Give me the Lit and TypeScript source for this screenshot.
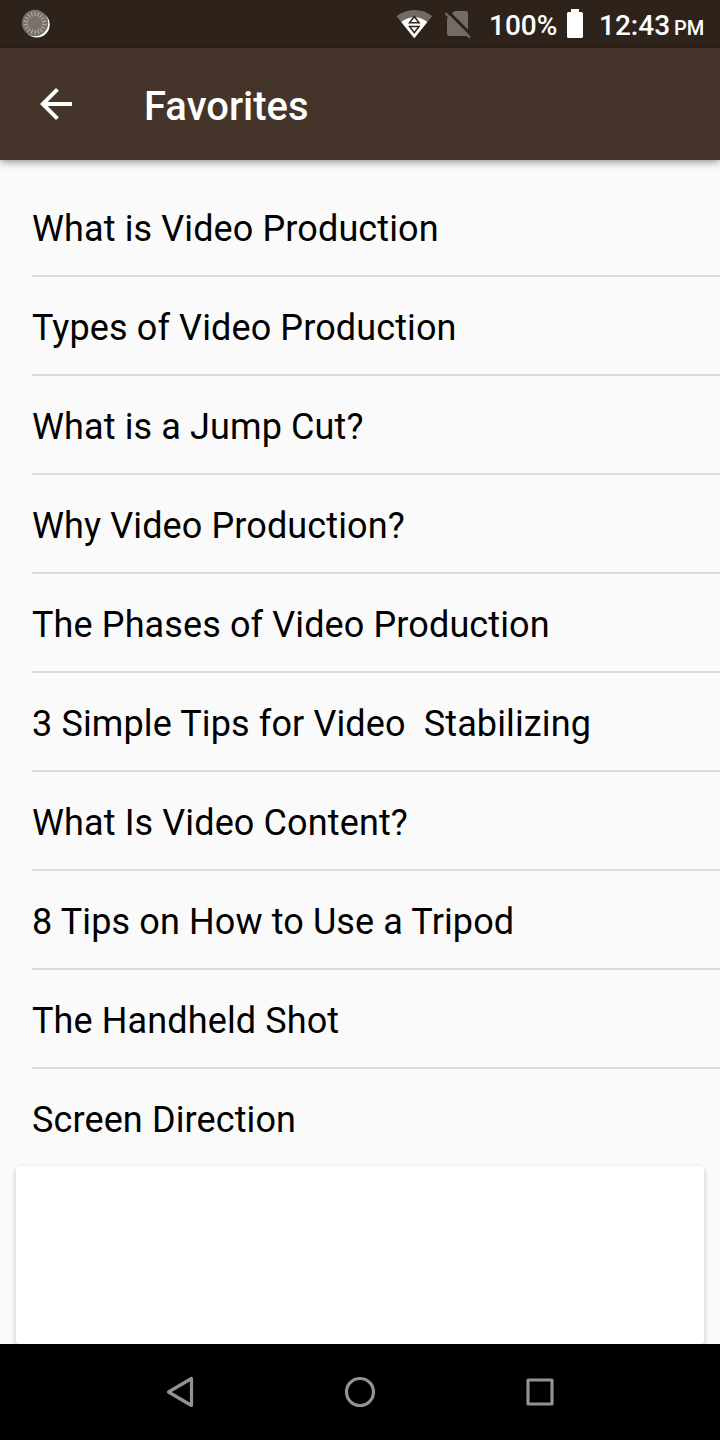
import { LitElement, html, css, svg } from "lit";
import { customElement, property } from "lit/decorators.js";

const TOPICS = [
  "What is Video Production",
  "Types of Video Production",
  "What is a Jump Cut?",
  "Why Video Production?",
  "The Phases of Video Production",
  "3 Simple Tips for Video  Stabilizing",
  "What Is Video Content?",
  "8 Tips on How to Use a Tripod",
  "The Handheld Shot",
  "Screen Direction",
];

@customElement("status-bar")
class StatusBar extends LitElement {
  static styles = css`
    :host {
      display: flex;
      align-items: center;
      height: 48px;
      padding: 0 16px 0 20px;
      box-sizing: border-box;
      background: #2e231b;
      color: #fff;
      font: 500 28px/48px Roboto, sans-serif;
    }
    svg { display: block; flex: none; }
    .space { flex: 1; }
    .sim { margin: 0 17px 0 12px; }
    .level { width: 77px; padding-top: 2px; box-sizing: border-box; height: 48px; }
    .battery { margin-right: 16px; }
    .clock { display: flex; align-items: baseline; width: 105px; height: 48px; padding-top: 2px; box-sizing: border-box; white-space: pre; }
    .half { font-size: 20px; margin-left: 4px; }
  `;
  render() {
    const ticks = Array.from({ length: 18 }, (_, i) => i * 20);
    return html`
      <svg width="32" height="48" viewBox="0 0 32 48">
        <circle cx="16.800" cy="24.700" r="12.900" fill="#fff" />
        <circle cx="15" cy="23" r="13.2" fill="#77706b" />
        ${ticks.map(
          (a) => svg`<path d="M15 11.5v4.5" stroke="#aaa5a1" stroke-width="1.3" transform="rotate(${a} 15 23)" />`
        )}
      </svg>
      <div class="space"></div>
      <svg width="36" height="48" viewBox="396 0 36 48">
        <path d="M396.6 16.2C401.5 12.3 407.600 10 414.300 10s12.900 2.300 17.800 6.200L414.300 38.300z" fill="#746b66" />
        <path d="M401.300 22C405 19 409.400 17.300 414.300 17.300s9.300 1.700 13 4.700L414.300 38.300z" fill="#fff" />
        <path d="M414.300 16.500l4.800 6.300h-9.600zM409.500 26.400h9.600l-4.800 6.300z" fill="#fff" stroke="#2e231b" stroke-width="1.500" />
      </svg>
      <svg class="sim" width="28" height="48" viewBox="444 0 28 48">
        <path d="M454.500 11h11.500q2 0 2 2v21q0 2-2 2h-17q-2 0-2-2V18.500z" fill="#746b66" />
        <path d="M447.800 11.500L472 35.700" stroke="#2e231b" stroke-width="3" />
        <path d="M445.300 13L469.800 37.500" stroke="#746b66" stroke-width="2.400" />
      </svg>
      <span class="level">100%</span>
      <svg class="battery" width="17" height="48" viewBox="566 0 17 48">
        <path d="M571 9h8v3h2.500q1.500 0 1.500 1.500v23q0 1.500-1.500 1.500h-13q-1.500 0-1.500-1.500v-23q0-1.500 1.500-1.500h2.500z" fill="#fff" />
      </svg>
      <span class="clock">12:43<span class="half">PM</span></span>
    `;
  }
}

@customElement("app-header")
class AppHeader extends LitElement {
  @property() heading = "";
  static styles = css`
    :host {
      display: flex;
      align-items: center;
      gap: 72px;
      height: 112px;
      padding: 0 40px;
      box-sizing: border-box;
      background: #453429;
      color: #fff;
      box-shadow: 0 2px 8px rgba(0, 0, 0, 0.42);
      position: relative;
    }
    svg { display: block; }
    .title { margin: 0; padding-top: 6px; font: 500 40px/48px Roboto, sans-serif; }
  `;
  render() {
    return html`
      <svg width="32" height="32" viewBox="4 4 16 16">
        <path d="M20 11H7.830l5.590-5.590L12 4l-8 8 8 8 1.410-1.410L7.830 13H20z" fill="#fff" />
      </svg>
      <h1 class="title">${this.heading}</h1>
    `;
  }
}

@customElement("nav-bar")
class NavBar extends LitElement {
  static styles = css`
    :host {
      display: grid;
      grid-template-columns: repeat(3, 180px);
      justify-content: center;
      align-items: center;
      justify-items: center;
      height: 96px;
      background: #000;
      position: relative;
    }
    svg { display: block; fill: none; stroke: #929292; stroke-width: 3.2; stroke-linejoin: round; }
  `;
  render() {
    return html`
      <svg width="36" height="36"><path d="M6.500 18L29.500 4.500v27z" /></svg>
      <svg width="36" height="36"><circle cx="18" cy="18" r="13.500" /></svg>
      <svg width="36" height="36"><rect x="6" y="6" width="24" height="24" /></svg>
    `;
  }
}

@customElement("app-root")
class AppRoot extends LitElement {
  static styles = css`
    :host {
      display: flex;
      flex-direction: column;
      width: 720px;
      height: 1440px;
      overflow: hidden;
      background: #fafafa;
      color: #000;
      font-family: Roboto, sans-serif;
    }
    .content { flex: 1; min-height: 0; display: flex; flex-direction: column; padding-top: 18px; }
    .topics { list-style: none; margin: 0; padding: 0 0 0 32px; }
    .topic {
      height: 99px;
      box-sizing: border-box;
      padding-top: 3px;
      border-bottom: 2px solid #dadada;
      font-size: 36px;
      line-height: 96px;
      letter-spacing: 0.12px;
      white-space: pre;
    }
    .topic:last-child { border-bottom: 0; height: 97px; }
    .card {
      flex: 1;
      margin: 0 16px;
      background: #fff;
      border-radius: 4px;
      box-shadow: 0 2px 5px rgba(0, 0, 0, 0.24);
    }
  `;
  render() {
    return html`
      <status-bar></status-bar>
      <app-header heading="Favorites"></app-header>
      <main class="content">
        <ul class="topics">
          ${TOPICS.map((t) => html`<li class="topic">${t}</li>`)}
        </ul>
        <div class="card"></div>
      </main>
      <nav-bar></nav-bar>
    `;
  }
}
